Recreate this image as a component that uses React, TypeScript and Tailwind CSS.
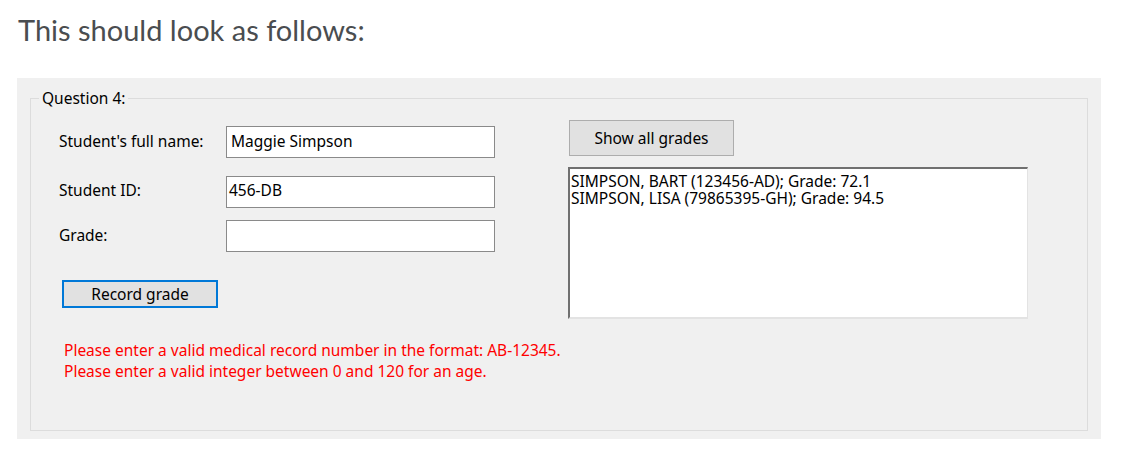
import React from "react";

const ui = "font-['Noto_Sans','Open_Sans',sans-serif]";

export default function App() {
  return (
    <div className="w-[1143px] h-[456px] bg-white overflow-hidden">
      {/* Intro sentence */}
      <h2 className="pl-[18px] pt-[12px] h-[78px] font-['Lato',sans-serif] font-normal text-[29px] leading-[36px] text-[#4a4d50]">
        This should look as follows:
      </h2>

      {/* Form window */}
      <div className={`ml-[17px] w-[1084px] h-[361px] bg-[#f0f0f0] px-[13px] pt-[11px] pb-[8px] text-[15.5px] text-black ${ui}`}>
        <fieldset className="h-full border border-[#dcdcdc]">
          <legend className="ml-[8px] px-[3px] text-[15.5px] leading-[18px]">Question 4:</legend>

          <div className="flex pl-[28px] pt-[19px]">
            {/* Left: entry fields */}
            <div className="w-[509px]">
              <div className="flex items-center h-[32px]">
                <span className="w-[167px]">Student's full name:</span>
                <div className="w-[269px] h-[32px] border border-[#8a8a8a] bg-white px-[4px] pt-[4px] leading-[20px]">
                  Maggie Simpson
                </div>
              </div>
              <div className="flex items-center h-[32px] mt-[18px]">
                <span className="w-[167px] -mt-[3px]">Student ID:</span>
                <div className="w-[269px] h-[32px] border border-[#8a8a8a] bg-white px-[2px] pt-[3px] leading-[20px]">
                  456-DB
                </div>
              </div>
              <div className="flex items-center h-[32px] mt-[12px]">
                <span className="w-[167px]">Grade:</span>
                <div className="w-[269px] h-[32px] border border-[#8a8a8a] bg-white" />
              </div>

              <button className="mt-[28px] ml-[3px] w-[156px] h-[28px] border-2 border-[#0078d7] bg-[#e1e1e1] text-[15.5px] leading-[18px]">
                Record grade
              </button>

              <div className="mt-[32px] ml-[5px] text-[#ff0000] leading-[21px]">
                <p>Please enter a valid medical record number in the format: AB-12345.</p>
                <p>Please enter a valid integer between 0 and 120 for an age.</p>
              </div>
            </div>

            {/* Right: grade list */}
            <div className="-mt-[6px]">
              <button className="ml-[1px] w-[165px] h-[36px] border border-[#adadad] bg-[#e1e1e1] text-[15.5px] leading-[18px]">
                Show all grades
              </button>
              <div className="mt-[11px] w-[460px] h-[152px] bg-white border-t-2 border-l-2 border-r border-b-2 border-t-[#707070] border-l-[#707070] border-r-[#e3e3e3] border-b-[#e3e3e3] px-[1px] pt-[4px] text-[15.5px] leading-[17px]">
                SIMPSON, BART (123456-AD); Grade: 72.1
                <br />
                SIMPSON, LISA (79865395-GH); Grade: 94.5
              </div>
            </div>
          </div>
        </fieldset>
      </div>
    </div>
  );
}
